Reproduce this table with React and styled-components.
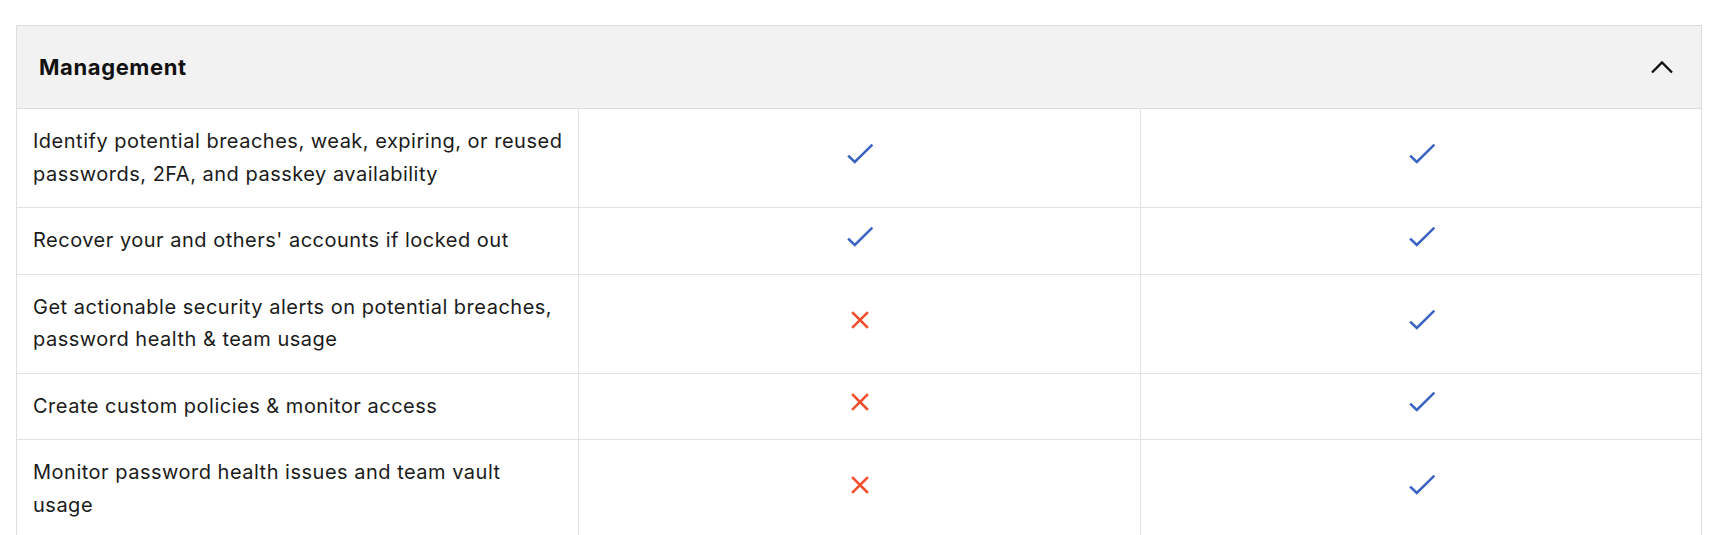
import React from "react";
import styled, { createGlobalStyle } from "styled-components";

const GlobalStyle = createGlobalStyle`
  html, body { margin: 0; padding: 0; background: #ffffff; }
  body { font-family: Inter, "Open Sans", "Liberation Sans", sans-serif; color: #1a1a1a; }
`;

const Page = styled.div`
  padding: 25px 11px 0 16px;
`;

const Table = styled.section`
  border: 1px solid #dedede;
  border-bottom: none;
`;

const Header = styled.div`
  display: flex;
  align-items: center;
  justify-content: space-between;
  height: 82px;
  padding: 0 27px 0 22px;
  background: #f2f2f2;
  border-bottom: 1px solid #dedede;
`;

const Title = styled.h2`
  margin: 0;
  font-size: 22px;
  font-weight: 700;
  color: #111;
  letter-spacing: 0.6px;
`;

const Row = styled.div`
  display: grid;
  grid-template-columns: 1fr 1fr 1fr;
  & + & { border-top: 1px solid #e3e3e3; }
`;

const Cell = styled.div`
  display: flex;
  align-items: center;
  justify-content: ${(p) => (p.$center ? "center" : "flex-start")};
  padding: 16px 14px 17px 16px;
  font-size: 20px;
  letter-spacing: 0.5px;
  line-height: 32.5px;
  color: #1b1b1b;
  & + & { border-left: 1px solid #e3e3e3; }
`;

const IconBox = styled.span`
  display: inline-flex;
  width: 26px;
  height: 26px;
  margin-top: -1px;
`;

const Check = () => (
  <IconBox>
    <svg width="26" height="26" viewBox="0 0 26 26" fill="none">
      <path d="M2 12.5 L7.8 18 L24.5 1.5" stroke="#3a63c2" strokeWidth="2.5" strokeLinecap="square" />
    </svg>
  </IconBox>
);

const Cross = () => (
  <IconBox>
    <svg width="26" height="26" viewBox="0 0 26 26" fill="none">
      <path d="M6 3 L20 17 M20 3 L6 17" stroke="#f0502b" strokeWidth="2.5" strokeLinecap="square" />
    </svg>
  </IconBox>
);

const Chevron = () => (
  <svg width="24" height="14" viewBox="0 0 24 14" fill="none">
    <path d="M2 12.5 L12 2.5 L22 12.5" stroke="#111" strokeWidth="2.3" />
  </svg>
);

const rows = [
  ["Identify potential breaches, weak, expiring, or reused passwords, 2FA, and passkey availability", true, true],
  ["Recover your and others' accounts if locked out", true, true],
  ["Get actionable security alerts on potential breaches, password health & team usage", false, true],
  ["Create custom policies & monitor access", false, true],
  ["Monitor password health issues and team vault usage", false, true],
];

export default function App() {
  return (
    <>
      <GlobalStyle />
      <Page>
        <Table>
          <Header>
            <Title>Management</Title>
            <Chevron />
          </Header>
          {rows.map(([label, a, b]) => (
            <Row key={label}>
              <Cell>{label}</Cell>
              <Cell $center>{a ? <Check /> : <Cross />}</Cell>
              <Cell $center>{b ? <Check /> : <Cross />}</Cell>
            </Row>
          ))}
        </Table>
      </Page>
    </>
  );
}
